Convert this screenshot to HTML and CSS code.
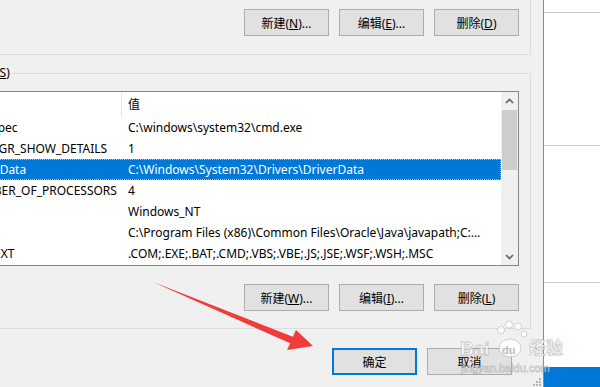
FILE: index.html
```html
<!DOCTYPE html>
<html lang="zh-CN">
<head>
    <meta charset="UTF-8">
    <title>环境变量</title>
    <link rel="stylesheet" href="styles.css">
</head>
<body>
    <div class="screen">
        <div class="dialog">
            <div class="group group-user">
                <div class="btn-row">
                    <button class="btn">新建(<u>N</u>)...</button>
                    <button class="btn">编辑(<u>E</u>)...</button>
                    <button class="btn">删除(<u>D</u>)</button>
                </div>
            </div>

            <div class="group group-sys">
                <div class="legend">系统变量(<u>S</u>)</div>
                <div class="listview">
                    <div class="list-body">
                        <div class="row head">
                            <div class="cell name">变量</div>
                            <div class="cell value">值</div>
                        </div>
                        <div class="row">
                            <div class="cell name">ComSpec</div>
                            <div class="cell value">C:\windows\system32\cmd.exe</div>
                        </div>
                        <div class="row">
                            <div class="cell name">DEVMGR_SHOW_DETAILS</div>
                            <div class="cell value">1</div>
                        </div>
                        <div class="row selected">
                            <div class="cell name">DriverData</div>
                            <div class="cell value">C:\Windows\System32\Drivers\DriverData</div>
                        </div>
                        <div class="row">
                            <div class="cell name">NUMBER_OF_PROCESSORS</div>
                            <div class="cell value">4</div>
                        </div>
                        <div class="row">
                            <div class="cell name">OS</div>
                            <div class="cell value">Windows_NT</div>
                        </div>
                        <div class="row">
                            <div class="cell name">Path</div>
                            <div class="cell value">C:\Program Files (x86)\Common Files\Oracle\Java\javapath;C:...</div>
                        </div>
                        <div class="row">
                            <div class="cell name">PATHEXT</div>
                            <div class="cell value">.COM;.EXE;.BAT;.CMD;.VBS;.VBE;.JS;.JSE;.WSF;.WSH;.MSC</div>
                        </div>
                    </div>
                    <div class="scrollbar">
                        <div class="sb-btn">
                            <svg width="9" height="6" viewBox="0 0 9 6"><path d="M1 5 L4.5 1.5 L8 5" fill="none" stroke="#606060" stroke-width="1.6"/></svg>
                        </div>
                        <div class="sb-thumb"></div>
                        <div class="sb-track"></div>
                        <div class="sb-btn">
                            <svg width="9" height="6" viewBox="0 0 9 6"><path d="M1 1 L4.5 4.5 L8 1" fill="none" stroke="#606060" stroke-width="1.6"/></svg>
                        </div>
                    </div>
                </div>
                <div class="btn-row">
                    <button class="btn">新建(<u>W</u>)...</button>
                    <button class="btn">编辑(<u>I</u>)...</button>
                    <button class="btn">删除(<u>L</u>)</button>
                </div>
            </div>

            <div class="footer">
                <button class="btn btn-default">确定</button>
                <button class="btn">取消</button>
            </div>

            <svg class="grip" width="8" height="8" viewBox="0 0 8 8">
                <rect x="6" y="0" width="2" height="2" fill="#b4b4b4"/>
                <rect x="3" y="3" width="2" height="2" fill="#b4b4b4"/>
                <rect x="6" y="3" width="2" height="2" fill="#b4b4b4"/>
                <rect x="0" y="6" width="2" height="2" fill="#b4b4b4"/>
                <rect x="3" y="6" width="2" height="2" fill="#b4b4b4"/>
                <rect x="6" y="6" width="2" height="2" fill="#b4b4b4"/>
            </svg>
        </div>

        <div class="desktop">
            <div class="tile tile-a"></div>
            <div class="tile tile-b"></div>
            <div class="tile tile-c"></div>
            <div class="tile tile-d"></div>
            <div class="taskbar"></div>
        </div>
    </div>

    <!-- red pointer arrow drawn over the screenshot -->
    <svg class="arrow" width="600" height="387" viewBox="0 0 600 387">
        <polygon points="153,282 292.8,336.7 296,330 313,346 287,350 290.2,343.3" fill="#f03b3b"/>
    </svg>

    <!-- baidu jingyan watermark -->
    <svg class="watermark" width="145" height="72" viewBox="455 315 145 72">
        <g fill="rgba(255,255,255,0.8)" stroke="rgba(140,140,140,0.45)" stroke-width="0.8">
            <text x="460" y="355" class="wm-bai">Bai</text>
            <circle cx="501" cy="330" r="3.6"/>
            <circle cx="509" cy="324.5" r="3.6"/>
            <circle cx="518" cy="326.5" r="3.6"/>
            <circle cx="524" cy="334" r="3"/>
            <ellipse cx="510" cy="348" rx="11" ry="9"/>
            <text x="529" y="354" class="wm-jy">经验</text>
            <text x="461" y="372" class="wm-url">jingyan.baidu.com</text>
        </g>
        <text x="502" y="354" class="wm-du">du</text>
    </svg>
</body>
</html>
```

FILE: styles.css
```css
* {
    box-sizing: border-box;
}
body {
    margin: 0;
    width: 600px;
    height: 387px;
    overflow: hidden;
    position: relative;
    background-color: #fff;
    font-family: "Noto Sans", "Noto Sans CJK SC", sans-serif;
    font-size: 12px;
    color: #000;
}
.screen {
    display: flex;
    height: 387px;
}
.dialog {
    position: relative;
    flex: none;
    width: 615px;
    margin-left: -71px;
    height: 387px;
    background-color: #f0f0f0;
    border-right: 1px solid #8c8c8c;
}
.group {
    margin: 0 12px 0 11px;
    border: 1px solid #dcdcdc;
}
.group-user {
    margin-top: -20px;
    padding: 28px 11px 18px 5px;
}
.group-sys {
    margin-top: 18px;
    padding: 0 11px 17px 5px;
}
.legend {
    width: fit-content;
    height: 16px;
    line-height: 16px;
    margin-top: -9px;
    padding: 0 2px;
    background-color: #f0f0f0;
}
.btn-row {
    display: flex;
    justify-content: flex-end;
    gap: 10px;
}
.group-sys .btn-row {
    margin-top: 18px;
}
.btn {
    width: 85px;
    height: 27px;
    padding: 0;
    font-family: inherit;
    font-size: 12px;
    color: #000;
    background-color: #e1e1e1;
    border: 1px solid #adadad;
    border-radius: 0;
}
.btn-default {
    border: 2px solid #0078d7;
}
.listview {
    display: flex;
    margin: 10px 0 0 12px;
    height: 175px;
    border: 1px solid #828790;
    background-color: #fff;
}
.list-body {
    flex: 1;
    overflow: hidden;
}
.row {
    display: grid;
    grid-template-columns: 163px 1fr;
    height: 21px;
    line-height: 21px;
    white-space: nowrap;
}
.row.head {
    height: 25px;
    line-height: 25px;
}
.cell {
    overflow: hidden;
}
.cell.name {
    padding-left: 6px;
}
.cell.value {
    padding-left: 6px;
}
.head .cell.name {
    border-right: 1px solid #e5e5e5;
}
.row.selected {
    background-color: #0078d7;
    color: #fff;
    outline: 1px dotted #f3b25c;
    outline-offset: -1px;
}
.scrollbar {
    display: flex;
    flex-direction: column;
    width: 17px;
    background-color: #f0f0f0;
}
.sb-btn {
    height: 17px;
    display: flex;
    align-items: center;
    justify-content: center;
}
.sb-thumb {
    height: 60px;
    margin: 1px 1px 0 1px;
    background-color: #cdcdcd;
}
.sb-track {
    flex: 1;
}
.footer {
    display: flex;
    justify-content: flex-end;
    gap: 10px;
    margin-top: 19px;
    padding-right: 31px;
}
.grip {
    position: absolute;
    right: 2px;
    bottom: 1px;
}
.desktop {
    flex: 1;
    display: flex;
    flex-direction: column;
}
.tile {
    border-bottom: 1px solid #cccccc;
}
.tile-a {
    height: 13px;
}
.tile-b {
    height: 133px;
}
.tile-c {
    height: 137px;
}
.tile-d {
    height: 84px;
    border-bottom: none;
}
.taskbar {
    flex: 1;
    background-color: #0078d7;
}
.arrow {
    position: absolute;
    left: 0;
    top: 0;
}
.watermark {
    position: absolute;
    left: 455px;
    top: 315px;
}
.wm-bai {
    font-family: "Liberation Sans", sans-serif;
    font-weight: bold;
    font-size: 19px;
}
.wm-jy {
    font-family: "Noto Sans CJK SC", sans-serif;
    font-weight: bold;
    font-size: 17px;
}
.wm-url {
    font-family: "Liberation Sans", sans-serif;
    font-size: 11px;
}
.wm-du {
    font-family: "Liberation Sans", sans-serif;
    font-weight: bold;
    font-size: 11px;
    fill: rgba(150,150,150,0.6);
}
```
